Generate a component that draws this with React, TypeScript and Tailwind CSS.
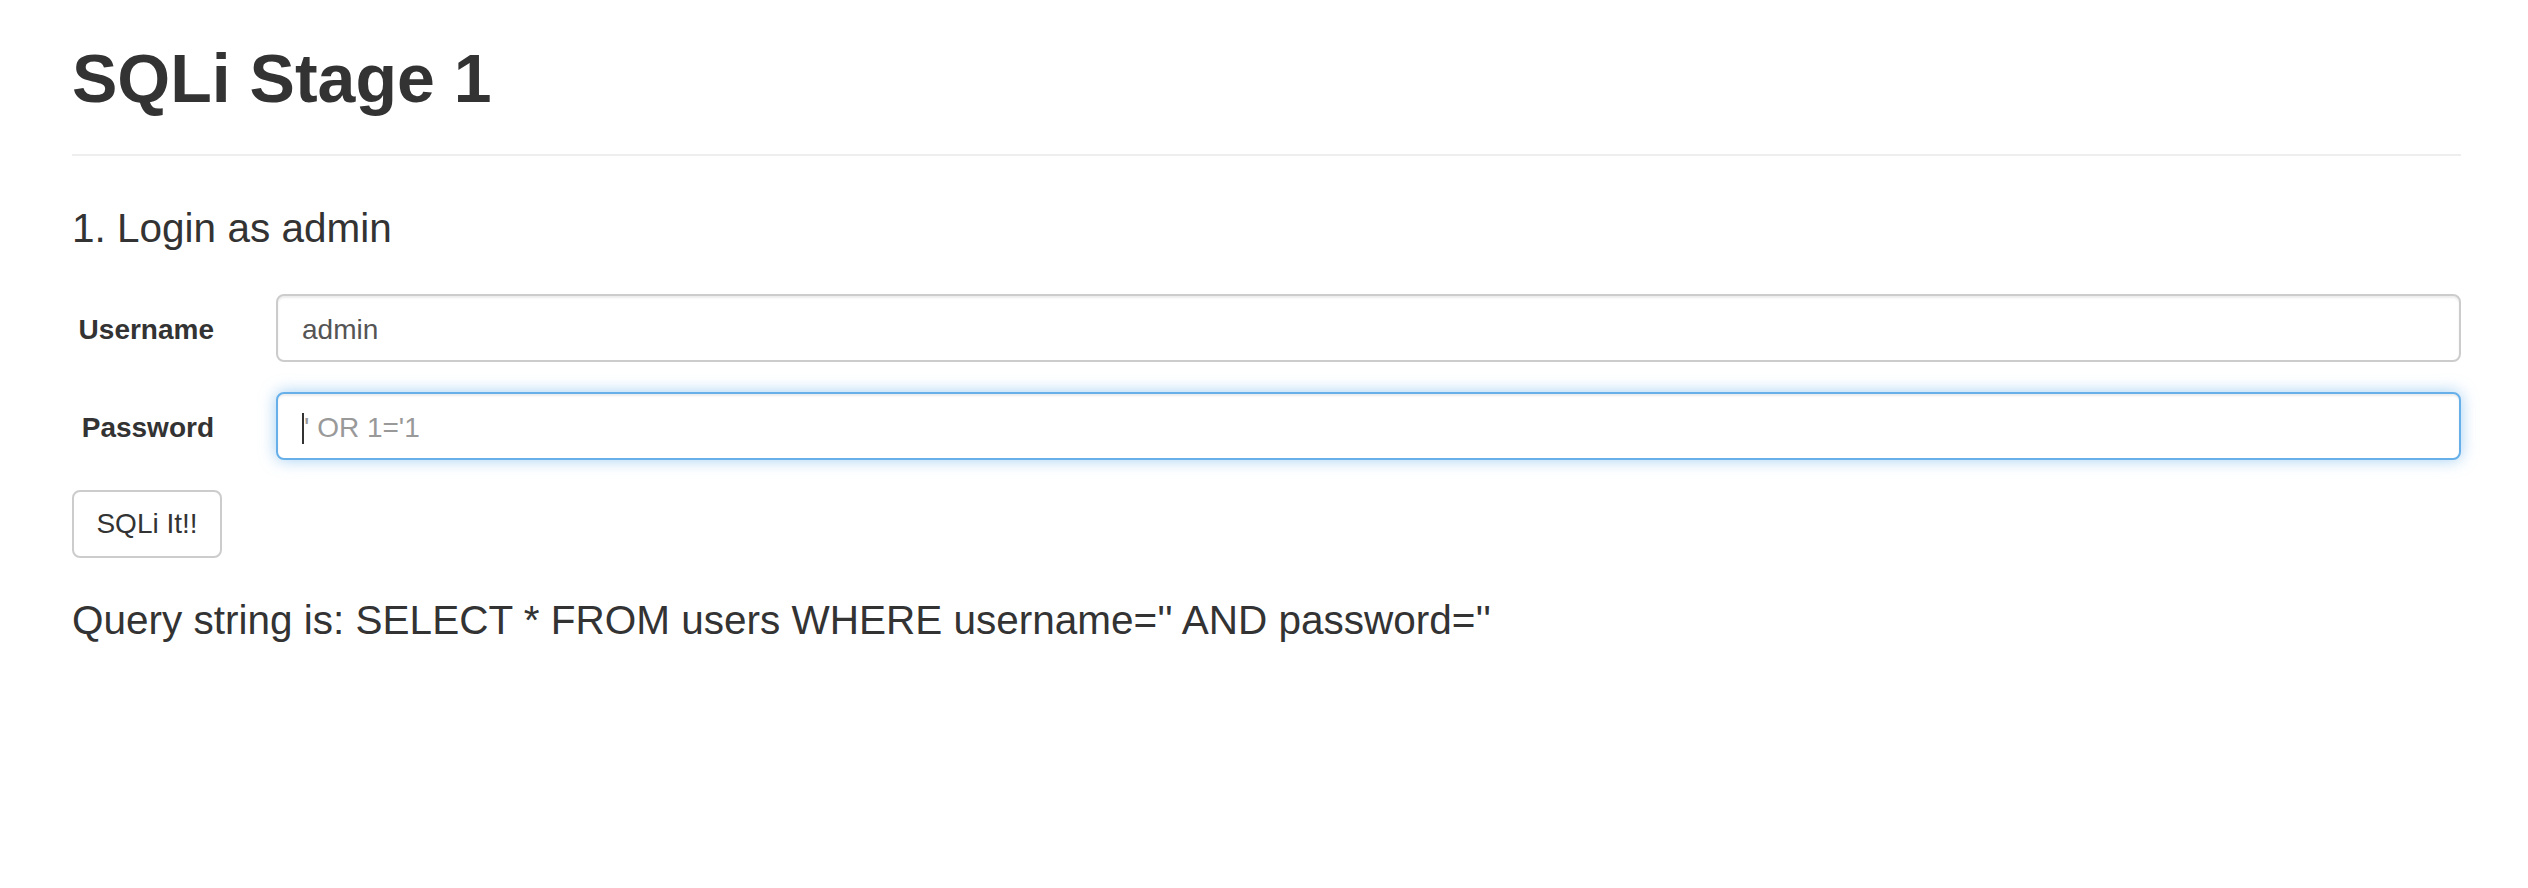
import React from "react";

const FONT = "font-['Liberation_Sans','Helvetica_Neue',Arial,sans-serif]";

function FieldRow({
  label,
  children,
  className = "",
}: {
  label: string;
  children: React.ReactNode;
  className?: string;
}) {
  return (
    <div className={`flex items-start ${className}`}>
      <label className="w-[142px] shrink-0 pt-[16px] text-right text-[28px] leading-[40px] font-bold text-[#333]">
        {label}
      </label>
      <div className="ml-[62px] flex-1">{children}</div>
    </div>
  );
}

export default function App() {
  return (
    <div className={`min-h-screen bg-white pl-[72px] pr-[67px] pt-[38px] text-[#333] ${FONT}`}>
      <h1 className="text-[68px] leading-[80px] font-bold">SQLi Stage 1</h1>
      <hr className="mt-[36px] border-t-2 border-[#eee]" />

      <h3 className="mt-[50px] text-[40.5px] leading-[44px] font-normal">1. Login as admin</h3>

      <form className="mt-[44px]" onSubmit={(e) => e.preventDefault()}>
        <FieldRow label="Username">
          <div className="flex h-[68px] items-center rounded-[8px] border-2 border-[#ccc] bg-white px-[24px] pt-[4px] text-[28px] leading-[40px] text-[#555] shadow-[inset_0_2px_2px_rgba(0,0,0,0.075)]">
            admin
          </div>
        </FieldRow>

        <FieldRow label="Password" className="mt-[30px]">
          <div className="flex h-[68px] items-center rounded-[8px] border-2 border-[#66afe9] bg-white px-[24px] pt-[4px] text-[28px] leading-[40px] text-[#999] shadow-[inset_0_2px_2px_rgba(0,0,0,0.075),0_0_16px_rgba(102,175,233,0.6)]">
            <span className="inline-block h-[31px] w-[2px] bg-[#333]" />
            <span>' OR 1='1</span>
          </div>
        </FieldRow>

        <button
          type="submit"
          className="mt-[30px] h-[68px] w-[150px] rounded-[8px] border-2 border-[#ccc] bg-white text-[28px] leading-[40px] text-[#333]"
        >
          SQLi It!!
        </button>
      </form>

      <p className="mt-[40px] text-[40.5px] leading-[44px]">
        Query string is: SELECT * FROM users WHERE username='' AND password=''
      </p>
    </div>
  );
}
